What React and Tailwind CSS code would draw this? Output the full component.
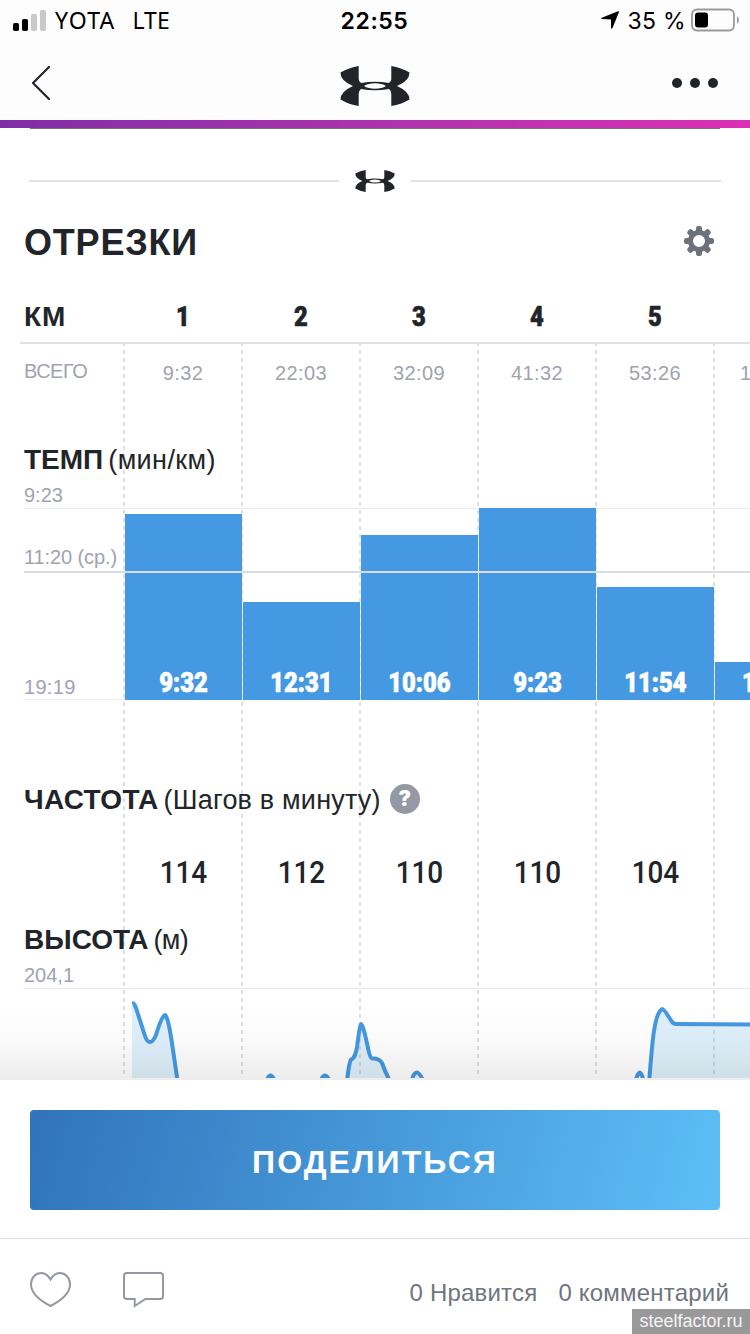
import React from 'react';

const splits = [
  { km: '1', total: '9:32', pace: '9:32', cadence: '114', height: 186 },
  { km: '2', total: '22:03', pace: '12:31', cadence: '112', height: 98.5 },
  { km: '3', total: '32:09', pace: '10:06', cadence: '110', height: 165.5 },
  { km: '4', total: '41:32', pace: '9:23', cadence: '110', height: 192 },
  { km: '5', total: '53:26', pace: '11:54', cadence: '104', height: 113 },
];

const columnLines = [124, 242, 360, 478, 596, 714];

function Logo({ className }) {
  return (
    <svg viewBox="0 0 70 40" preserveAspectRatio="none" className={className} fill="#212529">
      <path
        fillRule="evenodd"
        d="M.5 6.500Q9 1.500 18.700 0V13Q18.700 15.500 21 17Q35 14.300 49 17Q51.300 15.500 51.300 13V0Q61 1.500 69.500 6.500Q69.500 15 57 20Q69.500 25.500 69.500 33.500Q61 38.500 51.300 40V28Q51.300 24.500 49 23Q35 25.700 21 23Q18.700 24.500 18.700 28V40Q9 38.500 .5 33.500Q.5 25.500 13 20Q.5 15 .5 6.500ZM24 20Q28 22.800 35 22.800T46 20Q42 17.200 35 17.200T24 20Z"
      />
    </svg>
  );
}

function StatusBar() {
  return (
    <div className="grid h-10 grid-cols-3 items-center pl-[13px] pr-[10px] font-[Inter,sans-serif] text-black">
      <div className="flex items-center">
        <svg viewBox="0 0 33 21" className="h-[21px] w-[33px]">
          <rect x="0" y="13" width="6" height="8" rx="1.8" />
          <rect x="9" y="9" width="6" height="12" rx="1.8" />
          <rect x="18" y="4" width="6" height="17" rx="1.8" fill="#c9c9c9" />
          <rect x="27" y="0" width="6" height="21" rx="1.8" fill="#c9c9c9" />
        </svg>
        <span className="ml-[9px] font-['Noto_Sans',sans-serif] text-[23px] leading-6 tracking-[1.2px]">YOTA</span>
        <span className="ml-[17px] font-['Noto_Sans',sans-serif] text-[23px] leading-6">LTE</span>
      </div>
      <span className="pr-[4px] pt-px text-center text-[23px] font-semibold leading-6 tracking-[0.6px]">22:55</span>
      <div className="flex items-center justify-end">
        <svg viewBox="0 0 18 18" className="h-[18px] w-[18px]">
          <path d="M17 .3Q18.300 .1 17.800 1.500L11.500 17Q10.500 18.500 10 17V8.500L1 8Q-.8 7.500 .8 6.700Z" />
        </svg>
        <span className="ml-[9px] pt-px text-[23px] leading-6 tracking-[0.3px]">35 %</span>
        <svg viewBox="0 0 49 24" className="ml-[5px] h-6 w-[49px]">
          <rect x="1" y="1.500" width="42" height="21" rx="5" fill="none" stroke="#999" strokeWidth="1.800" />
          <rect x="4" y="4.500" width="13" height="15" rx="3" />
          <path d="M46 8Q50 12 46 16Z" fill="#999" />
        </svg>
      </div>
    </div>
  );
}

function NavBar() {
  return (
    <div className="flex h-20 items-center justify-between px-8">
      <svg viewBox="0 0 18 34" className="mt-[6px] h-[34px] w-[46px]" preserveAspectRatio="xMinYMid meet">
        <path d="M17 1L1 17L17 33" fill="none" stroke="#212529" strokeWidth="2.200" strokeLinecap="round" />
      </svg>
      <Logo className="mt-[11px] h-10 w-[70px]" />
      <div className="mt-[6px] flex w-[46px] gap-2">
        <span className="h-[10px] w-[10px] shrink-0 rounded-full bg-[#212529]" />
        <span className="h-[10px] w-[10px] shrink-0 rounded-full bg-[#212529]" />
        <span className="h-[10px] w-[10px] shrink-0 rounded-full bg-[#212529]" />
      </div>
    </div>
  );
}

function GearIcon() {
  const teeth = [0, 45, 90, 135, 180, 225, 270, 315];
  return (
    <svg viewBox="-15 -15 30 30" className="mb-[2px] h-[30px] w-[30px]" fill="#6c717c">
      {teeth.map((angle) => (
        <rect key={angle} x="-3" y="-15" width="6" height="8" rx="2.200" transform={`rotate(${angle})`} />
      ))}
      <circle r="8.500" fill="none" stroke="#6c717c" strokeWidth="5" />
    </svg>
  );
}

function SectionTitle({ title, unit, titleClass = '', unitClass = '', children }) {
  return (
    <div className="flex h-10 items-center pl-6 text-[#212529]">
      <span className={`pt-px text-[28px] font-bold leading-10 ${titleClass}`}>{title}</span>
      <span className={`ml-[5px] pt-px text-[27px] leading-10 ${unitClass}`}>{unit}</span>
      {children}
    </div>
  );
}

function PaceChart() {
  return (
    <div className="relative flex h-[221px]">
      <div className="absolute left-6 right-0 top-[29px] h-px bg-[#e9ebee]" />
      <div className="absolute bottom-0 left-6 right-0 h-px bg-[#eceef0]" />
      <div className="flex w-[125px] shrink-0 flex-col pl-6 text-[20px] text-[#9fa3b1]">
        <span className="h-8 leading-8">9:23</span>
        <span className="mt-[30px] h-8 whitespace-nowrap leading-8 tracking-[-0.1px]">11:20 (ср.)</span>
        <span className="mt-[101px] h-[26px] leading-[26px] tracking-[0.3px]">19:19</span>
      </div>
      <div className="relative flex items-end gap-px">
        {splits.map((s) => (
          <div
            key={s.km}
            className="flex w-[117px] shrink-0 items-end justify-center bg-[#4499e2] pb-px"
            style={{ height: s.height }}
          >
            <span className="origin-center scale-x-[.88] font-[Roboto,sans-serif] text-[27px] font-black leading-8 text-white [-webkit-text-stroke:0.7px_white]">
              {s.pace}
            </span>
          </div>
        ))}
        <div className="flex h-[38.5px] w-[35px] shrink-0 items-end bg-[#4499e2] pb-px pl-[27px]">
          <span className="origin-left scale-x-[.88] font-[Roboto,sans-serif] text-[27px] font-black leading-8 text-white [-webkit-text-stroke:0.7px_white]">
            1
          </span>
        </div>
      </div>
      <div className="absolute left-6 right-0 top-[92px] h-[2px] bg-[#d9dde3]" />
    </div>
  );
}

function ElevationChart() {
  return (
    <svg viewBox="132 989 618 89" className="ml-[132px] h-[89px] w-[618px]">
      <g fill="#44a7e2" fillOpacity=".17" stroke="#4499e2" strokeWidth="4" strokeLinejoin="round">
        <path
          stroke="none"
          d="M132 1003L134 1003L145 1036Q147 1042 150 1042Q153 1042 156 1036Q163 1014 165 1015Q168 1016 173 1050L178 1084H132Z"
        />
        <path
          fill="none"
          d="M132 1003.500Q134 1002.500 136 1008L145 1036Q147 1042 150 1042Q153 1042 156 1035Q162 1015 165 1015Q168 1015 173 1050L178 1084"
        />
        <path fill="#4499e2" fillOpacity="1" d="M266 1082Q270.500 1069 275 1082M320 1082Q325 1069 330 1082" />
        <path d="M347 1081Q349 1063 351 1059.500C355 1058 356 1053 357 1047Q360 1024 361 1024Q363 1024 368 1048Q370 1058 372 1058.500Q379 1058 382 1063Q386 1074 390 1081" />
        <path d="M411 1083Q416 1062 424 1083M635 1083Q640 1062 644 1083" />
        <path d="M649 1084C652 1045 654 1012 662.500 1009Q664 1009 672 1022Q674 1024 676 1024L754 1024.500V1084" />
      </g>
    </svg>
  );
}

// dashed separators between kilometres
function ColumnLines() {
  return (
    <svg className="absolute left-0 top-[216px] h-[730px] w-[750px]" viewBox="0 344 750 730">
      {columnLines.map((x) => (
        <line key={x} x1={x} x2={x} y1="342" y2="1074" stroke="#dddfe6" strokeWidth="2" strokeDasharray="4 4" />
      ))}
    </svg>
  );
}

function Splits() {
  return (
    <div className="relative h-[952px] overflow-hidden bg-white">
      <div className="mx-[30px] h-px bg-[#70757f]" />
      <div className="mx-[29px] mt-8 flex h-10 items-center">
        <div className="h-[2px] flex-1 bg-[#dee1e6]" />
        <Logo className="mx-4 h-[22px] w-10" />
        <div className="h-[2px] flex-1 bg-[#dee1e6]" />
      </div>
      <div className="flex h-[82px] items-center justify-between pl-6 pr-9">
        <h1 className="pt-px text-[36px] font-bold tracking-[0.8px] text-[#212529]">ОТРЕЗКИ</h1>
        <GearIcon />
      </div>
      <div className="ml-5 mt-[7px] flex h-[54px] items-center border-b-2 border-[#dee1e6] pt-[2px] text-[#212529]">
        <span className="w-[104px] shrink-0 pl-1 text-[28px] font-bold tracking-[1px]">КМ</span>
        {splits.map((s) => (
          <span
            key={s.km}
            className="w-[118px] shrink-0 scale-x-[.88] text-center font-[Roboto,sans-serif] text-[27px] font-black [-webkit-text-stroke:0.6px_#212529]"
          >
            {s.km}
          </span>
        ))}
      </div>
      <div className="flex h-[54px] items-center text-[20px] text-[#9fa3b1]">
        <span className="w-[124px] shrink-0 pl-6 tracking-[-0.5px]">ВСЕГО</span>
        {splits.map((s) => (
          <span key={s.km} className="w-[118px] shrink-0 pt-1 text-center tracking-[0.4px]">
            {s.total}
          </span>
        ))}
        <span className="pl-[26px] pt-1">1</span>
      </div>
      <ColumnLines />
      <div className="relative mt-[41px]">
        <SectionTitle title="ТЕМП" unit="(мин/км)" unitClass="tracking-[0.4px]" />
        <PaceChart />
        <div className="mt-[79px]">
          <SectionTitle
            title="ЧАСТОТА"
            unit="(Шагов в минуту)"
            titleClass="tracking-[0.3px]"
            unitClass="tracking-[0.2px]"
          >
            <span className="ml-[9px] flex h-[30px] w-[30px] items-center justify-center rounded-full bg-[#9599a5] font-[Inter,sans-serif] text-[21px] font-black text-white">
              ?
            </span>
          </SectionTitle>
        </div>
        <div className="mt-[34px] flex h-10 items-center pl-[124px]">
          {splits.map((s) => (
            <span
              key={s.km}
              className="w-[118px] shrink-0 scale-x-[.9] pl-px text-center font-[Roboto,sans-serif] text-[31px] font-medium leading-10 text-[#212529]"
            >
              {s.cadence}
            </span>
          ))}
        </div>
        <div className="mt-[26px]">
          <SectionTitle title="ВЫСОТА" unit="(м)" unitClass="tracking-[-0.7px]" />
        </div>
        <div className="ml-6 h-[30px] border-b border-[#e6e8ec] text-[20px] leading-8 text-[#9fa3b1]">204,1</div>
        <ElevationChart />
      </div>
    </div>
  );
}

function BottomPanel() {
  return (
    <div className="relative h-[254px] bg-white">
      <div className="absolute bottom-full left-0 h-20 w-full bg-linear-to-t from-black/[.075] via-black/[.018] via-50% to-transparent" />
      <div className="px-[30px] pt-[30px]">
        <button className="block h-[100px] w-full rounded-[4px] bg-linear-105 from-[#3173bb] to-[#5dbff6] pt-1 text-[32px] font-bold tracking-[2.1px] text-white">
          ПОДЕЛИТЬСЯ
        </button>
      </div>
      <div className="mt-7 flex h-24 items-center border-t border-[#dcdde6] pl-[30px]">
        <svg viewBox="0 0 41 35" className="mt-[6px] h-[35px] w-[41px]" fill="none" stroke="#9397a3" strokeWidth="2">
          <path d="M20.500 7.500C17 1.500 14 1 11.500 1C5.500 1 1 5.500 1 12.500C1 21 9 28 20.500 34C32 28 40 21 40 12.500C40 5.500 35.500 1 29.500 1C27 1 24 1.500 20.500 7.500Z" />
        </svg>
        <svg viewBox="0 0 42 36" className="ml-[51.5px] mt-[6px] h-9 w-[41px]" preserveAspectRatio="none" fill="none" stroke="#9397a3" strokeWidth="2">
          <path d="M4 1H38Q41 1 41 4V24Q41 27 38 27H23L12 34V27H4Q1 27 1 24V4Q1 1 4 1Z" />
        </svg>
        <div className="ml-auto mr-[21px] mt-[12px] flex gap-[21px] text-[24px] leading-8 tracking-[0.2px] text-[#70747e]">
          <span>0 Нравится</span>
          <span>0 комментарий</span>
        </div>
      </div>
      <div className="absolute bottom-0 right-0 h-[25px] w-[118px] bg-[#999] text-center text-[18px] leading-[25px] text-[#f4f4f4]">
        steelfactor.ru
      </div>
    </div>
  );
}

export default function App() {
  return (
    <div className="flex h-[1334px] w-[750px] flex-col overflow-hidden bg-white font-['Liberation_Sans',sans-serif]">
      <header className="bg-[#fdfdfd]">
        <StatusBar />
        <NavBar />
        <div className="h-2 bg-linear-to-r from-[#7f2da6] to-[#dc2fb4]" />
      </header>
      <Splits />
      <BottomPanel />
    </div>
  );
}
